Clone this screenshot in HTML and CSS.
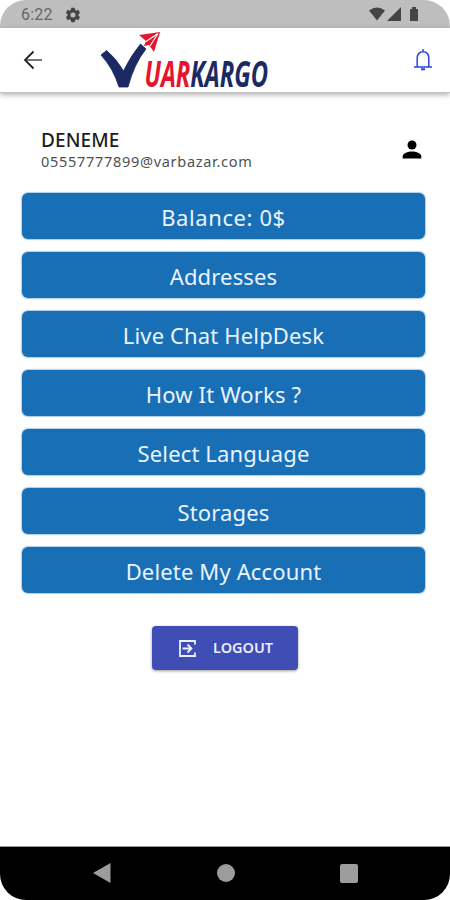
FILE: index.html
```html
<!DOCTYPE html>
<html lang="en">
<head>
<meta charset="utf-8">
<title>Account</title>
<link rel="stylesheet" href="styles.css">
</head>
<body>
<div class="phone">
  <div class="status">
    <span class="time">6:22</span>
    <svg class="gear" width="16" height="16" viewBox="2 2 20 20"><path fill="#444" stroke="#444" stroke-width=".6" fill-rule="evenodd" d="M18.400 13c.1-.7.1-1.300 0-2l2.100-1.600-2-3.500-2.500 1a7 7 0 0 0-1.700-1L14 3.200h-4l-.4 2.700a7 7 0 0 0-1.700 1l-2.500-1-2 3.500L5.600 11a8 8 0 0 0 0 2l-2.200 1.600 2 3.500 2.500-1a7 7 0 0 0 1.700 1l.4 2.700h4l.3-2.700a7 7 0 0 0 1.700-1l2.500 1 2-3.500zM12 8.500a3.500 3.500 0 1 1 0 7 3.500 3.500 0 0 1 0-7z"/></svg>
    <svg class="signals" width="52" height="16" viewBox="0 0 52 16" fill="#444"><path d="M0 3.500Q8-2.500 16 3.500L8 13.500z"/><path d="M32 0V14H18z"/><path d="M41 2h2V0h4v2h2v12h-8z"/></svg>
  </div>
  <header class="bar">
    <svg class="back" width="20" height="20" viewBox="0 0 20 20" fill="none"><path d="M3 10H19" stroke="#777" stroke-width="1.800"/><path d="M10.500 1.500L2 10l8.500 8.500" stroke="#222" stroke-width="1.800"/></svg>
    <svg class="logo" width="174" height="64" viewBox="0 -1 174 64">
      <path d="M0 26L5.500 21.500Q15 29 22.500 42Q29 28 39.500 15L45 20Q33 35 27 58H18Q12 39 0 26z" fill="#1b2a63" stroke="#1b2a63" stroke-width=".8"/>
      <path d="M38 6L59 3 53 23 48 16 43 17 45 12z" fill="#e6142d"/>
      <path d="M57 4.500L45 12.500M57 4.500L49 17" stroke="#fff" stroke-width="1.100"/>
      <text class="brand" x="43.500" y="57.500" textLength="123.500" lengthAdjust="spacingAndGlyphs"><tspan fill="#e6142d">UAR</tspan><tspan fill="#1b2a63">KARGO</tspan></text>
    </svg>
    <svg class="bell" width="20" height="24" viewBox="0 0 20 24" fill="none" stroke="#2945e0" stroke-width="1.500"><path d="M4.200 18.500V9.500a5.800 5.800 0 0 1 11.600 0v9M1 19h18M10 1v3"/><path d="M8 21.200h4" stroke-width="2"/></svg>
  </header>
  <main class="content">
    <section class="profile">
      <div>
        <div class="name">DENEME</div>
        <div class="mail">05557777899@varbazar.com</div>
      </div>
      <svg class="person" width="20" height="20" viewBox="0 0 20 20"><circle cx="10" cy="5" r="4.500"/><path d="M.7 18.500V16.500C.7 13 6 11.500 10 11.500s9.300 1.500 9.300 5v2z"/></svg>
    </section>
    <nav class="menu">
      <a class="item balance">Balance: 0$</a>
      <a class="item">Addresses</a>
      <a class="item">Live Chat HelpDesk</a>
      <a class="item">How It Works ?</a>
      <a class="item">Select Language</a>
      <a class="item">Storages</a>
      <a class="item">Delete My Account</a>
    </nav>
    <button class="logout">
      <svg width="17" height="17" viewBox="0 0 17 17" fill="none" stroke="#edf0ff" stroke-width="1.800"><path d="M16 4.500V1H1v15h15v-3.500M3.500 8.500H12M8.500 4.500l4 4-4 4"/></svg>
      <span>LOGOUT</span>
    </button>
  </main>
  <footer class="nav">
    <svg width="18" height="20" viewBox="0 0 18 20"><path d="M0 10L17.500 0v20z" fill="#9c9c9c"/></svg>
    <span class="home"></span>
    <span class="recent"></span>
  </footer>
</div>
</body>
</html>
```

FILE: styles.css
```css
* { box-sizing: border-box; }
body { margin: 0; background: #fff; font-family: "Noto Sans", sans-serif; }
.phone { width: 450px; height: 900px; display: flex; flex-direction: column; overflow: hidden; border-radius: 26px; background: #fff; }
.status { height: 28px; flex: none; display: flex; align-items: center; padding: 1px 29px 0 21px; background: #bebebe; }
.time { font: 16px Roboto, sans-serif; color: #666; width: 44px; letter-spacing: .2px; }
.signals { margin-left: auto; }
.bar { height: 65px; flex: none; display: flex; align-items: center; padding: 0 17px 0 23px; background: #fff; border-bottom: 1px solid #c4c4c4; box-shadow: 0 2px 5px rgba(0,0,0,.3); }
.logo { margin-left: 58px; overflow: visible; }
.brand { font: italic 700 35px "Open Sans", sans-serif; }
.bell { margin-left: auto; }
.content { flex: 1; display: flex; flex-direction: column; padding: 34px 25px 0 22px; }
.profile { height: 66px; display: flex; justify-content: space-between; padding: 0 3px 0 19px; }
.name { font-size: 19px; line-height: 26px; letter-spacing: .1px; color: #1c1c1c; font-weight: 500; }
.mail { font-size: 14.5px; line-height: 17px; letter-spacing: .7px; color: #505050; }
.person { margin-top: 13px; }
.menu { display: grid; grid-auto-rows: 46px; gap: 13px; }
.item { display: flex; align-items: center; justify-content: center; padding-top: 1px; border-radius: 6px; background: #196fb6; box-shadow: 0 0 1px 1px rgba(25,111,182,.35); color: #eaf3ff; font-size: 22px; letter-spacing: .15px; }
.balance { letter-spacing: .6px; }
.logout { width: 146px; height: 44px; margin: 33px auto 0 130px; padding: 0 0 0 27px; display: flex; align-items: center; gap: 17px; border: 0; border-radius: 4px; background: #3f4db5; box-shadow: 0 1px 3px rgba(0,0,0,.4); color: #edf0ff; font: 600 14.5px "Noto Sans", sans-serif; }
.logout span { padding-bottom: 2px; }
.nav { height: 54px; flex: none; display: flex; align-items: center; padding: 0 0 1px 93px; background: #000; border-top: 1px solid #999; }
.home { width: 18px; height: 18px; margin-left: 106px; border-radius: 50%; background: #9c9c9c; }
.recent { width: 18px; height: 19px; margin-left: 105px; border-radius: 2px; background: #9c9c9c; }
```
